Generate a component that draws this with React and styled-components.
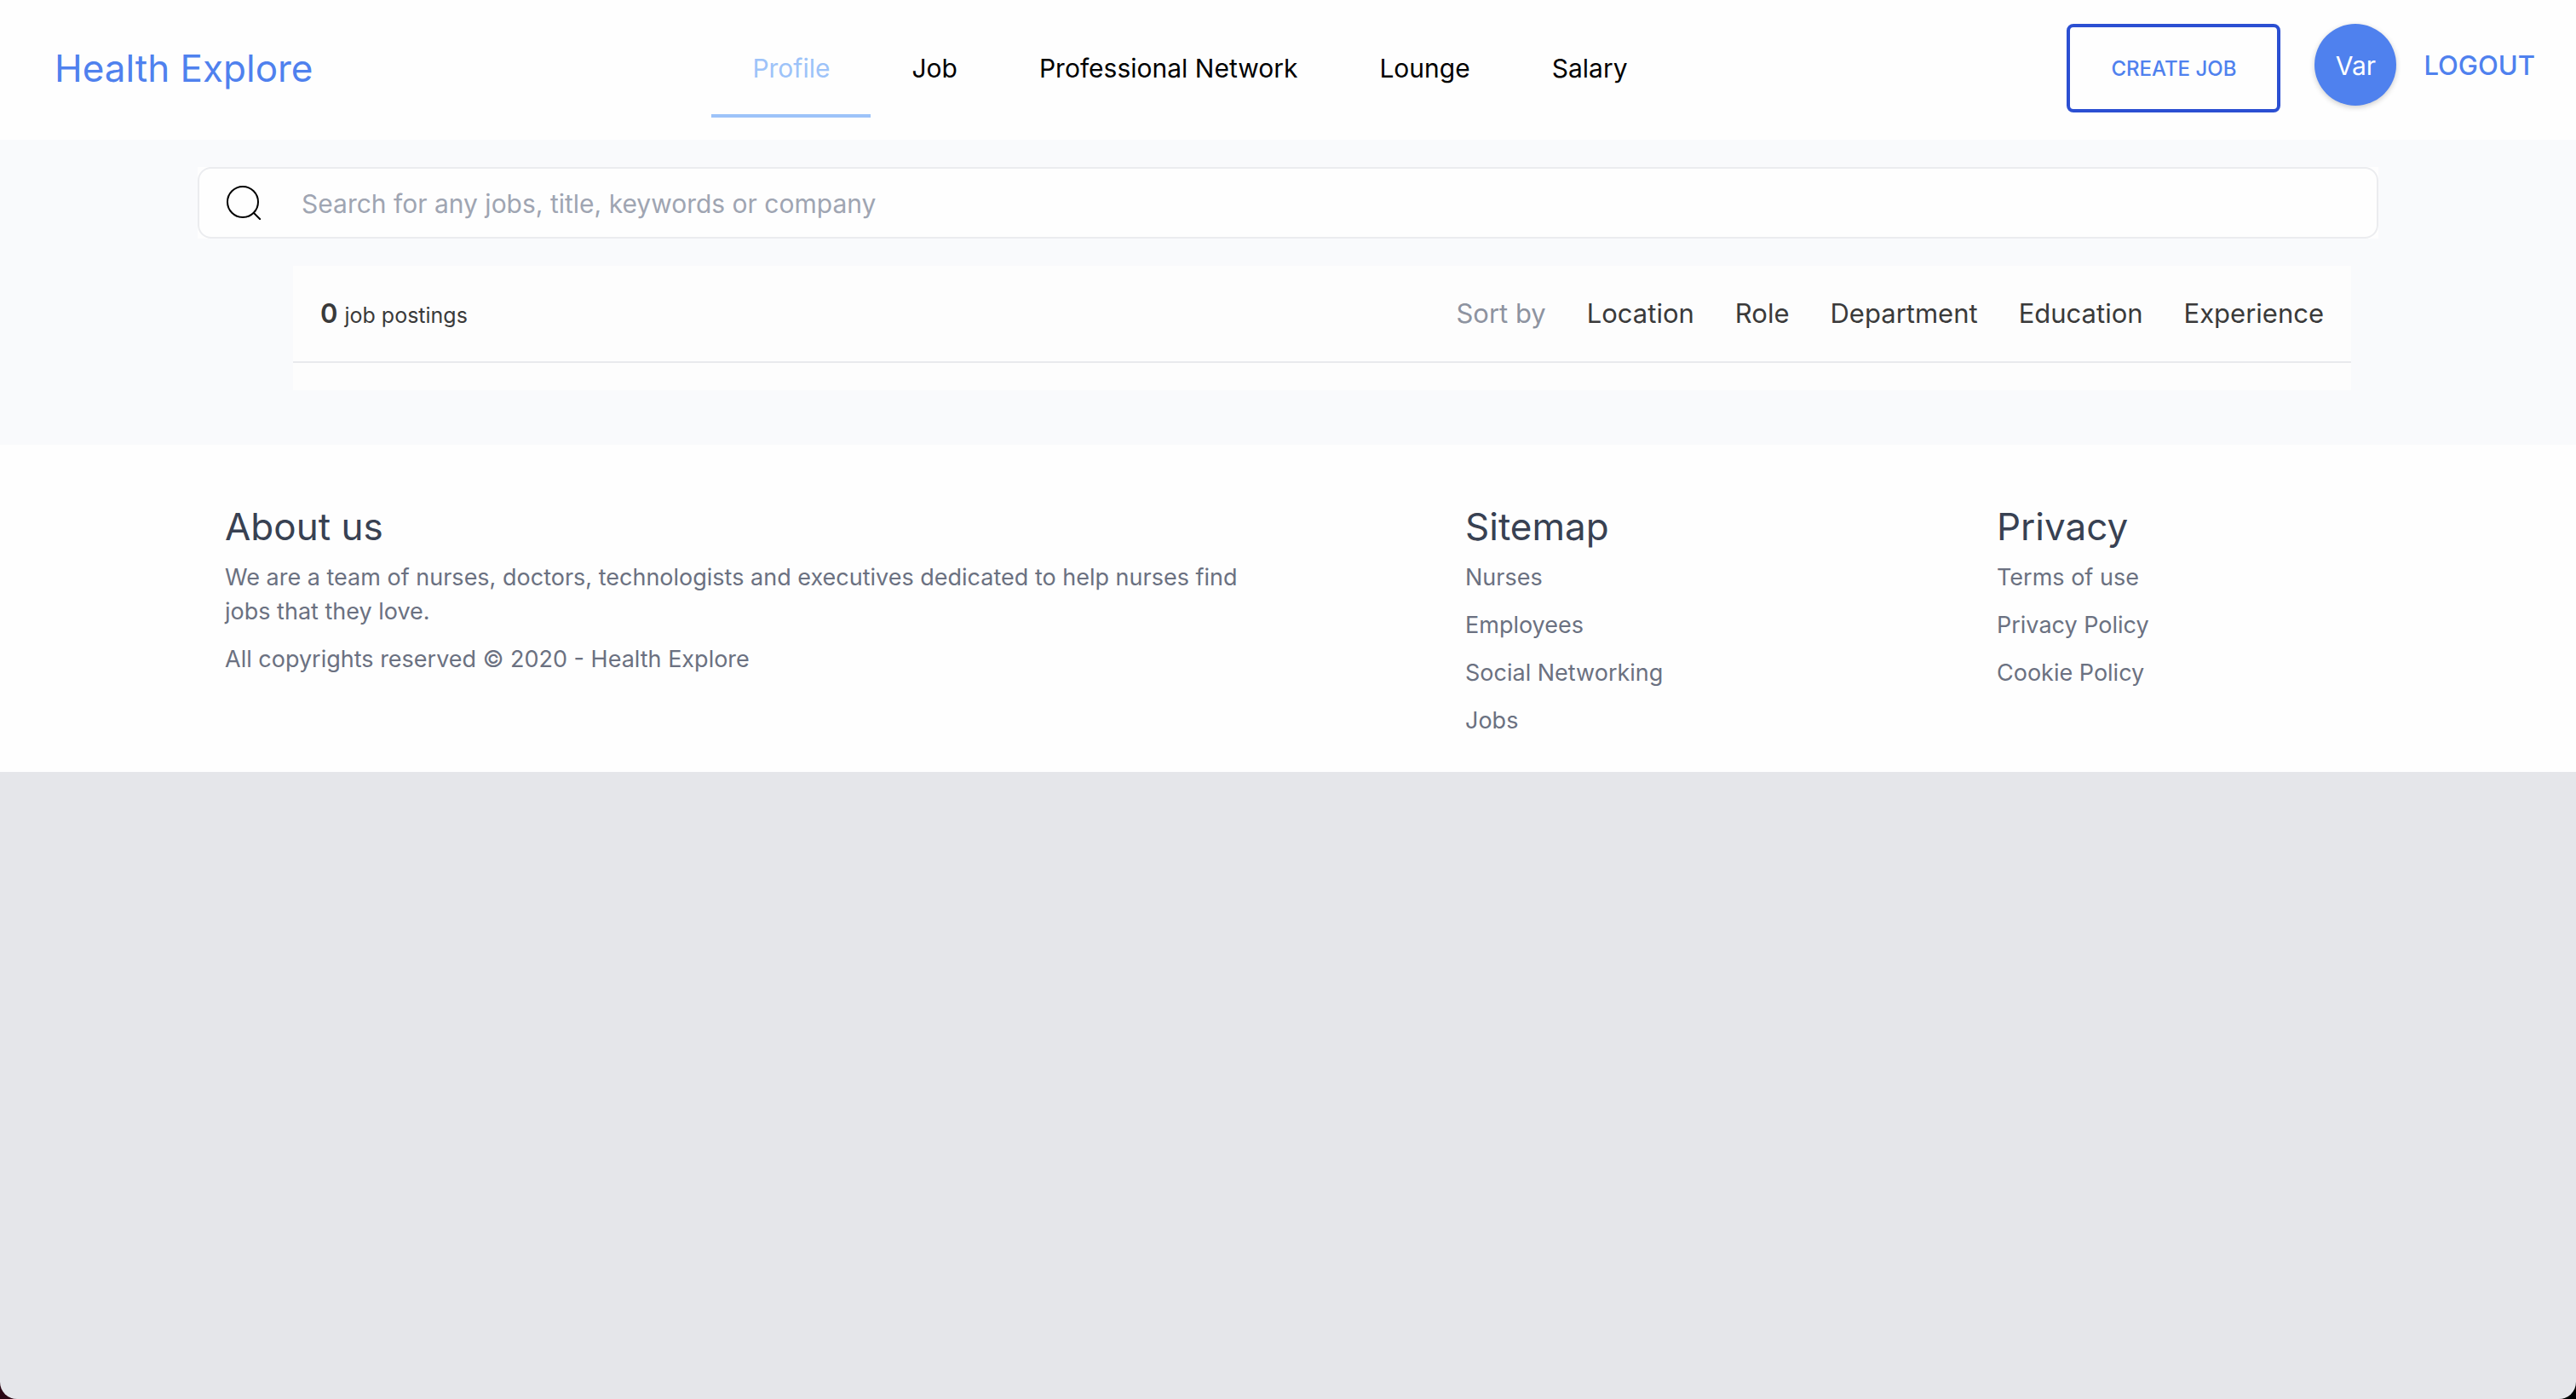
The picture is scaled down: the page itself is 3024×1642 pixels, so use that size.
import React from "react";
import styled, { createGlobalStyle } from "styled-components";

const GlobalStyle = createGlobalStyle`
  *, *::before, *::after { box-sizing: border-box; }
  body {
    margin: 0;
    background: linear-gradient(to right, #2b0714 50%, #000000 50%);
    font-family: Inter, "Liberation Sans", sans-serif;
    font-size: 30px;
    line-height: 48px;
    color: #000000;
  }
  h2, p, ul { margin: 0; padding: 0; }
  ul { list-style: none; }
  a { color: inherit; text-decoration: none; }
  button, input { font: inherit; }
`;

const Page = styled.div`
  display: flex;
  flex-direction: column;
  min-height: 100vh;
  background: #e5e6ea;
  border-radius: 0 0 20px 20px;
`;

const Header = styled.header`
  display: flex;
  align-items: center;
  justify-content: space-between;
  padding: 22px 48px 26px 64px;
  background: #fefefe;
`;

const Logo = styled.a`
  font-size: 44px;
  line-height: 64px;
  && { color: #4f81ee; }
`;

const Nav = styled.nav`
  display: flex;
`;

const NavLink = styled.a`
  padding: 34px 48px 30px;
  border-bottom: 4px solid ${(p) => (p.$active ? "#9dc3f9" : "transparent")};
  && { color: ${(p) => (p.$active ? "#9dc3f9" : "#000000")}; }
`;

const Actions = styled.div`
  display: flex;
  align-items: flex-start;
`;

const CreateButton = styled.button`
  height: 104px;
  margin-right: 40px;
  padding: 2px 48px 0;
  border: 4px solid #2b4fd2;
  border-radius: 8px;
  background: transparent;
  font-size: 24px;
  font-weight: 500;
  text-transform: uppercase;
  color: #4f81ee;
`;

const Avatar = styled.button`
  width: 96px;
  height: 96px;
  margin-right: 32px;
  padding: 2px 0 0;
  border: 0;
  border-radius: 50%;
  background: #4f81ee;
  box-shadow: 0 2px 6px rgba(0, 0, 0, 0.2);
  color: #ffffff;
`;

const Logout = styled.button`
  height: 96px;
  padding: 2px 0 0;
  border: 0;
  background: transparent;
  font-size: 31px;
  font-weight: 500;
  text-transform: uppercase;
  color: #4f81ee;
`;

const Main = styled.main`
  padding: 32px 0 64px;
  background: #f9fafc;
`;

const Container = styled.div`
  width: 100%;
  max-width: 2560px;
  margin: 0 auto;
`;

const SearchArea = styled.div`
  background: #fefefe;
`;

const SearchBox = styled.label`
  display: flex;
  align-items: center;
  gap: 48px;
  height: 84px;
  padding: 0 32px;
  border: 2px solid #ebecef;
  border-radius: 16px;
`;

const SearchInput = styled.input`
  flex: 1;
  min-width: 0;
  padding: 2px 0 0;
  border: 0;
  outline: 0;
  background: transparent;
  color: #000000;
  &::placeholder { color: #9fa5b2; opacity: 1; }
`;

const Results = styled.section`
  margin: 32px 32px 0 112px;
  padding-bottom: 32px;
  background: #fdfdfd;
`;

const ResultsBar = styled.div`
  display: flex;
  align-items: center;
  justify-content: space-between;
  padding: 32px;
  border-bottom: 2px solid #e9eaed;
  color: #3a3a3a;
  font-size: 31px;
`;

const Count = styled.p`
  display: flex;
  align-items: baseline;
  gap: 8px;
`;

const CountNumber = styled.strong`
  font-weight: 600;
`;

const CountLabel = styled.span`
  font-size: 25px;
  line-height: 40px;
`;

const SortList = styled.div`
  display: flex;
  gap: 48px;
`;

const SortLabel = styled.span`
  color: #8d93a0;
`;

const SortButton = styled.button`
  padding: 0;
  border: 0;
  background: transparent;
  color: #3a3a3a;
`;

const Footer = styled.footer`
  padding: 64px 0 40px;
  background: #fefefe;
`;

const FooterGrid = styled(Container)`
  display: grid;
  grid-template-columns: 7fr 3fr 2fr;
  padding: 0 32px;
`;

const FooterTitle = styled.h2`
  margin-bottom: 8px;
  font-size: 44px;
  line-height: 64px;
  font-weight: 400;
  color: #384152;
`;

const FooterItems = styled.ul`
  display: flex;
  flex-direction: column;
  gap: 16px;
  max-width: 1248px;
  font-size: 27px;
  line-height: 40px;
  color: #6b7181;
`;

const NAV = ["Profile", "Job", "Professional Network", "Lounge", "Salary"];
const SORTS = ["Location", "Role", "Department", "Education", "Experience"];
const LINKS = [
  { title: "Sitemap", items: ["Nurses", "Employees", "Social Networking", "Jobs"] },
  { title: "Privacy", items: ["Terms of use", "Privacy Policy", "Cookie Policy"] },
];

const SearchIcon = () => (
  <svg width="40" height="40" viewBox="0 0 40 40" fill="none" stroke="#000" strokeWidth="2" aria-hidden="true">
    <circle cx="19" cy="19" r="18" />
    <path d="M32 32l8 8" />
  </svg>
);

export default function App() {
  return (
    <>
      <GlobalStyle />
      <Page>
        <Header>
          <Logo href="#">Health Explore</Logo>
          <Nav>
            {NAV.map((item) => (
              <NavLink key={item} href="#" $active={item === "Profile"}>{item}</NavLink>
            ))}
          </Nav>
          <Actions>
            <CreateButton type="button">Create job</CreateButton>
            <Avatar type="button">Var</Avatar>
            <Logout type="button">Logout</Logout>
          </Actions>
        </Header>
        <Main>
          <Container>
            <SearchArea>
              <SearchBox>
                <SearchIcon />
                <SearchInput
                  type="text"
                  aria-label="Search jobs"
                  placeholder="Search for any jobs, title, keywords or company"
                />
              </SearchBox>
            </SearchArea>
            <Results>
              <ResultsBar>
                <Count>
                  <CountNumber>0</CountNumber>
                  <CountLabel>job postings</CountLabel>
                </Count>
                <SortList>
                  <SortLabel>Sort by</SortLabel>
                  {SORTS.map((s) => <SortButton key={s} type="button">{s}</SortButton>)}
                </SortList>
              </ResultsBar>
            </Results>
          </Container>
        </Main>
        <Footer>
          <FooterGrid>
            <div>
              <FooterTitle>About us</FooterTitle>
              <FooterItems as="div">
                <p>
                  We are a team of nurses, doctors, technologists and executives dedicated to help
                  nurses find jobs that they love.
                </p>
                <p>All copyrights reserved © 2020 - Health Explore</p>
              </FooterItems>
            </div>
            {LINKS.map((col) => (
              <div key={col.title}>
                <FooterTitle>{col.title}</FooterTitle>
                <FooterItems>
                  {col.items.map((i) => <li key={i}><a href="#">{i}</a></li>)}
                </FooterItems>
              </div>
            ))}
          </FooterGrid>
        </Footer>
      </Page>
    </>
  );
}
